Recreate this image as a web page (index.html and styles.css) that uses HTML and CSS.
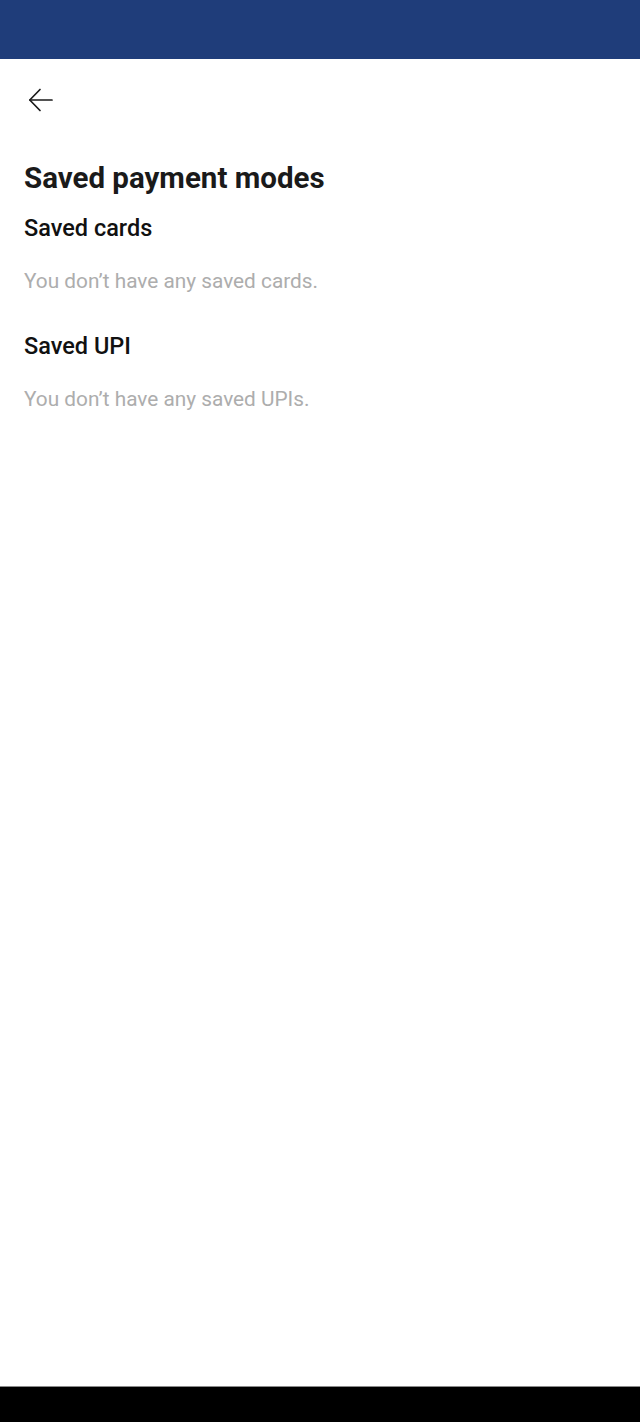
FILE: index.html
```html
<!DOCTYPE html>
<html lang="en">

<head>
    <meta charset="UTF-8">
    <meta name="viewport" content="width=device-width, initial-scale=1.0">
    <title>Saved payment modes</title>
    <link rel="stylesheet" href="styles.css">
</head>

<body>
    <div class="page">
        <div class="status-bar"></div>

        <div class="content">
            <button class="back-btn" aria-label="Back">
                <svg width="26" height="26" viewBox="0 0 26 26" fill="none" stroke="#1a1a1a" stroke-width="1.7"
                    stroke-linecap="round" stroke-linejoin="round">
                    <path d="M24 13H2" />
                    <path d="M12 2.5L1.8 13L12 23.5" />
                </svg>
            </button>

            <h1 class="page-title">Saved payment modes</h1>

            <div class="section">
                <h2 class="section-title">Saved cards</h2>
                <p class="empty-text">You don’t have any saved cards.</p>
            </div>

            <div class="section">
                <h2 class="section-title">Saved UPI</h2>
                <p class="empty-text">You don’t have any saved UPIs.</p>
            </div>
        </div>

        <div class="nav-bar"></div>
    </div>
</body>

</html>
```

FILE: styles.css
```css
* {
    box-sizing: border-box;
}

html,
body {
    margin: 0;
    padding: 0;
}

body {
    font-family: Roboto, "Noto Sans", Arial, sans-serif;
    background-color: white;
    color: #1a1a1a;
}

.page {
    display: flex;
    flex-direction: column;
    height: 1422px;
}

.status-bar {
    height: 59px;
    background-color: #1f3d7a;
}

.content {
    flex: 1;
    padding: 0 24px;
}

.back-btn {
    display: block;
    background: none;
    border: none;
    padding: 0;
    margin: 28px 0 0 4px;
    width: 26px;
    height: 26px;
    cursor: pointer;
}

.back-btn svg {
    display: block;
}

.page-title {
    font-size: 29.5px;
    font-weight: 700;
    margin: 47px 0 0;
    line-height: 36px;
    color: #1a1a1a;
}

.section-title {
    font-size: 23.5px;
    font-weight: 500;
    margin: 0;
    line-height: 28px;
    color: #111;
}

.section:first-of-type .section-title {
    margin-top: 18px;
}

/* empty state message */
.empty-text {
    font-size: 20.8px;
    color: #adadad;
    margin: 27px 0 0;
    line-height: 24px;
}

.section + .section {
    margin-top: 39px;
}

.nav-bar {
    height: 36px;
    background-color: #000;
    border-top: 1px solid #8a8a8a;
}
```
